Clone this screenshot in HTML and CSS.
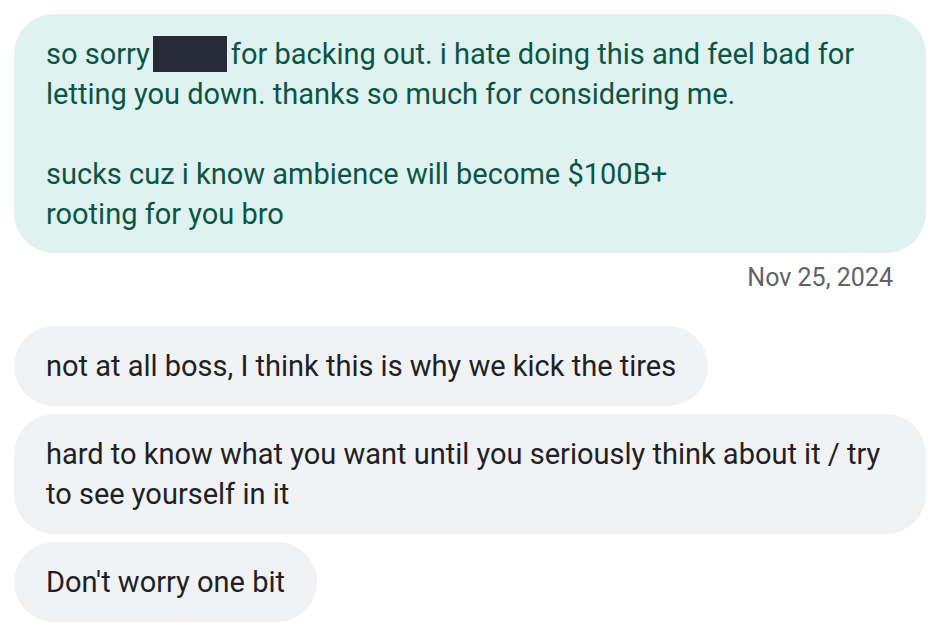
FILE: index.html
```html
<!DOCTYPE html>
<html>
<head>
<meta charset="utf-8">
<link rel="stylesheet" href="styles.css">
</head>
<body>
<div class="thread">
  <div class="bubble sent">
    <p>so sorry<span class="redact"></span>for backing out. i hate doing this and feel bad for letting you down. thanks so much for considering me.</p>
    <p class="gap">sucks cuz i know ambience will become $100B+<br>rooting for you bro</p>
  </div>
  <div class="date">Nov 25, 2024</div>
  <div class="received">
    <div class="bubble recv">not at all boss, I think this is why we kick the tires</div>
    <div class="bubble recv">hard to know what you want until you seriously think about it / try to see yourself in it</div>
    <div class="bubble recv">Don't worry one bit</div>
  </div>
</div>
</body>
</html>
```
FILE: styles.css
```css
html, body {
  margin: 0;
  padding: 0;
  background: #ffffff;
}
body {
  font-family: Roboto, "Liberation Sans", sans-serif;
  font-size: 29px;
  line-height: 40px;
}
.thread {
  padding: 14px 12px 0 14px;
  display: flex;
  flex-direction: column;
  align-items: flex-start;
}
.bubble {
  box-sizing: border-box;
  max-width: 912px;
  padding: 20px 32px;
  border-radius: 40px;
}
.sent {
  width: 912px;
  background: #e0f2f0;
  color: #0b5546;
  padding-bottom: 19px;
}
.sent p {
  margin: 0;
}
.sent p.gap {
  margin-top: 40px;
}
.redact {
  display: inline-block;
  width: 74px;
  height: 36px;
  background: #262c36;
  vertical-align: -8px;
  margin: 0 4px 0 3px;
}
.date {
  align-self: stretch;
  text-align: right;
  padding-right: 33px;
  color: #5f6368;
  font-size: 25px;
  line-height: 30px;
  margin: 10px 0 33px;
}
.received {
  display: flex;
  flex-direction: column;
  align-items: flex-start;
  gap: 8px;
}
.recv {
  background: #f1f2f4;
  color: #202124;
}
```
